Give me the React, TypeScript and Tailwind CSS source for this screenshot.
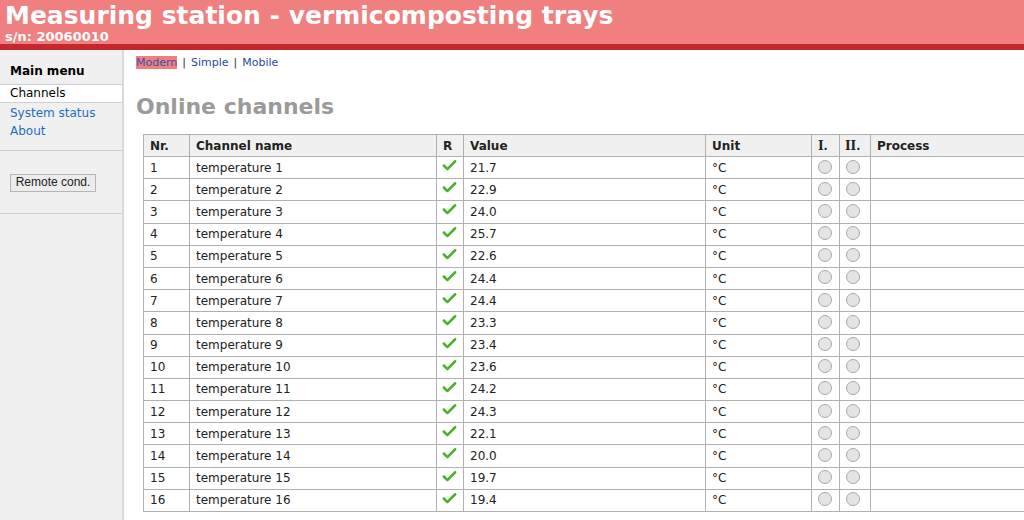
import { Check } from 'lucide-react';

const ROWS = [
  ['1', '21.7'],
  ['2', '22.9'],
  ['3', '24.0'],
  ['4', '25.7'],
  ['5', '22.6'],
  ['6', '24.4'],
  ['7', '24.4'],
  ['8', '23.3'],
  ['9', '23.4'],
  ['10', '23.6'],
  ['11', '24.2'],
  ['12', '24.3'],
  ['13', '22.1'],
  ['14', '20.0'],
  ['15', '19.7'],
  ['16', '19.4'],
];

function Radio() {
  return <span className="inline-block h-[14px] w-[14px] rounded-full border border-[#a8a8a8] bg-[#e4e4e4] align-middle" />;
}

export default function App() {
  return (
    <div className="flex h-[520px] w-[1024px] flex-col overflow-hidden bg-white font-['DejaVu_Sans',sans-serif] text-[12px] text-[#222]">
      {/* Header */}
      <div className="h-[44px] bg-[#f08080] px-[5px] text-white">
        <div className="pt-[1px] text-[25px] font-bold leading-[29px]">Measuring station - vermicomposting trays</div>
        <div className="text-[13px] font-bold leading-[14px]">s/n: 20060010</div>
      </div>
      <div className="h-[6px] bg-[#c2282c]" />

      <div className="flex flex-1">
        {/* Sidebar */}
        <div className="w-[124px] shrink-0 border-r-2 border-[#dadada] bg-[#f0f0f0]">
          <div className="border-b border-[#cfcfcf] px-[10px] pb-[4px] pt-[13px] text-[12px] font-bold leading-[17px] text-black">Main menu</div>
          <div className="border-b border-[#cfcfcf] bg-white px-[10px] leading-[17px] text-black">Channels</div>
          <div className="border-b border-[#cfcfcf] pb-[10px] pt-[1px]">
            <div className="px-[10px] leading-[18px] text-[#1e6ec0]">System status</div>
            <div className="px-[10px] leading-[18px] text-[#1e6ec0]">About</div>
          </div>
          <div className="border-b border-[#cfcfcf] px-[10px] pb-[21px] pt-[22px]">
            <button className="h-[18px] w-[86px] border border-[#b5b5b5] bg-[#ececec] font-['Liberation_Sans',sans-serif] text-[12px] leading-[15px] text-[#222]">Remote cond.</button>
          </div>
        </div>

        {/* Content */}
        <div className="min-w-0 flex-1 pl-[12px]">
          <div className="pt-[6px] text-[11px] leading-[14px] text-[#333]">
            <span className="bg-[#f08080] text-[#3a52a8]">Modern</span>
            <span className="px-[5px]">|</span>
            <span className="text-[#2a4aa0]">Simple</span>
            <span className="px-[5px]">|</span>
            <span className="text-[#2a4aa0]">Mobile</span>
          </div>
          <h1 className="pt-[23px] text-[22px] font-bold leading-[28px] text-[#9a9a9a]">Online channels</h1>

          <table className="mt-[13px] ml-[7px] w-[900px] border-collapse text-left">
            <thead>
              <tr className="h-[22px] bg-[#f0f0f0]">
                <th className="w-[46px] border border-[#b0b0b0] px-[6px] font-bold">Nr.</th>
                <th className="w-[247px] border border-[#b0b0b0] px-[6px] font-bold">Channel name</th>
                <th className="w-[27px] border border-[#b0b0b0] px-[6px] font-bold">R</th>
                <th className="w-[242px] border border-[#b0b0b0] px-[6px] font-bold">Value</th>
                <th className="w-[106px] border border-[#b0b0b0] px-[6px] font-bold">Unit</th>
                <th className="w-[28px] border border-[#b0b0b0] px-[6px] font-['DejaVu_Serif',serif] font-bold">I.</th>
                <th className="w-[31px] border border-[#b0b0b0] px-[5px] font-['DejaVu_Serif',serif] font-bold">II.</th>
                <th className="border border-[#b0b0b0] px-[6px] font-bold">Process</th>
              </tr>
            </thead>
            <tbody>
              {ROWS.map(([n, v]) => (
                <tr key={n} className="h-[22.2px]">
                  <td className="border border-[#b0b0b0] px-[6px]">{n}</td>
                  <td className="border border-[#b0b0b0] px-[6px]">temperature {n}</td>
                  <td className="border border-[#b0b0b0] px-[4px] align-top">
                    <Check className="h-[17px] w-[17px] text-[#4caf2a]" strokeWidth={3.5} />
                  </td>
                  <td className="border border-[#b0b0b0] px-[6px]">{v}</td>
                  <td className="border border-[#b0b0b0] px-[6px]">°C</td>
                  <td className="border border-[#b0b0b0] px-[6px] align-top"><Radio /></td>
                  <td className="border border-[#b0b0b0] px-[6px] align-top"><Radio /></td>
                  <td className="border border-[#b0b0b0] px-[6px]" />
                </tr>
              ))}
            </tbody>
          </table>
        </div>
      </div>
    </div>
  );
}
